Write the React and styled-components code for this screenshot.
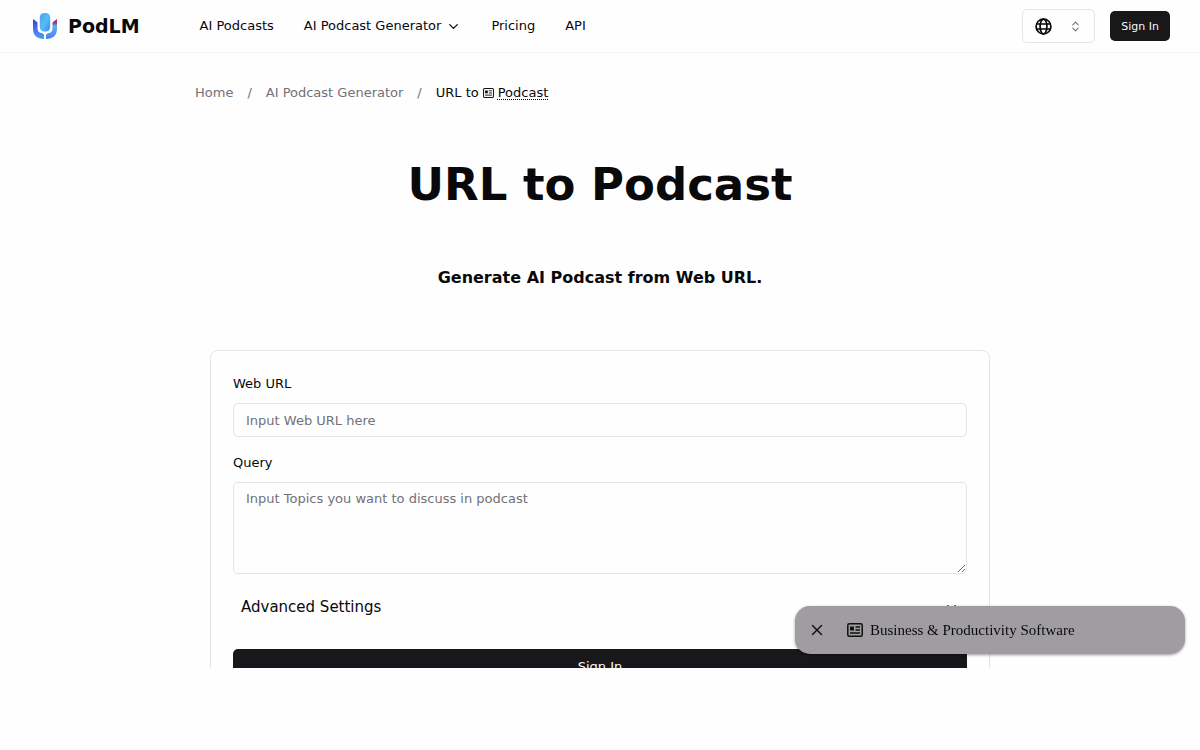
import styled, { createGlobalStyle } from 'styled-components';
import { ChevronDown, ChevronsUpDown, X } from 'lucide-react';

const GlobalStyle = createGlobalStyle`
  * {
    box-sizing: border-box;
  }
  body {
    margin: 0;
    background: #fefefe;
    color: #09090b;
    font-family: 'DejaVu Sans', sans-serif;
    font-size: 13px;
    line-height: 20px;
  }
  a {
    color: inherit;
    text-decoration: none;
  }
  button, input, textarea {
    font-family: inherit;
  }
`;

const Page = styled.div`
  height: calc(100vh - 82px);
  overflow: hidden;
`;

const Header = styled.header`
  display: flex;
  align-items: center;
  height: 53px;
  padding: 0 30px 0 32px;
  border-bottom: 1px solid #f4f4f5;
`;

const Brand = styled.a`
  display: flex;
  align-items: center;
  gap: 10px;
  margin-right: 60px;
  font-size: 19px;
  font-weight: 700;
`;

const Menu = styled.nav`
  display: flex;
  align-items: center;
  gap: 30px;
  flex: 1;
`;

const MenuButton = styled.button`
  display: flex;
  align-items: center;
  gap: 5px;
  padding: 0;
  border: none;
  background: none;
  color: inherit;
  font-size: 13px;
  line-height: 20px;
  cursor: pointer;
`;

const LanguagePicker = styled.label`
  position: relative;
  display: flex;
  align-items: center;
  justify-content: space-between;
  width: 73px;
  height: 34px;
  margin-right: 15px;
  padding: 0 12px;
  border: 1px solid #e4e4e7;
  border-radius: 5px;
`;

const LanguageSelect = styled.select`
  position: absolute;
  inset: 0;
  width: 100%;
  opacity: 0;
  cursor: pointer;
`;

const SignInButton = styled.button`
  height: 30px;
  padding: 0 11px;
  border: none;
  border-radius: 5px;
  background: #18181b;
  color: #fafafa;
  font-size: 11px;
  cursor: pointer;
`;

const Breadcrumb = styled.nav`
  display: flex;
  gap: 14px;
  max-width: 810px;
  margin: 30px auto 0;
  color: #71717a;
`;

const Current = styled.span`
  display: flex;
  align-items: center;
  gap: 4px;
  color: #09090b;
`;

const Keyword = styled.a`
  text-decoration: underline dotted 1px;
  text-underline-offset: 2px;
`;

const Title = styled.h1`
  margin: 54px 0 0;
  font-size: 45px;
  line-height: 56px;
  text-align: center;
`;

const Subtitle = styled.h2`
  margin: 53px 0 60px;
  font-size: 16px;
  line-height: 24px;
  text-align: center;
`;

const Card = styled.form`
  display: flex;
  flex-direction: column;
  max-width: 780px;
  margin: 0 auto;
  padding: 23px 22px;
  border: 1px solid #e4e4e7;
  border-radius: 8px;
`;

const Field = styled.div`
  display: flex;
  flex-direction: column;
  gap: 9px;
  margin-bottom: 16px;
`;

const TextInput = styled.input`
  height: 34px;
  padding: 0 12px;
  border: 1px solid #e4e4e7;
  border-radius: 5px;
  background: transparent;
  font-size: 13px;
  &::placeholder {
    color: #71717a;
  }
`;

const TextArea = styled.textarea`
  height: 92px;
  padding: 6px 12px;
  border: 1px solid #e4e4e7;
  border-radius: 5px;
  background: transparent;
  font-size: 13px;
  line-height: 20px;
  resize: vertical;
  &::placeholder {
    color: #71717a;
  }
`;

const Advanced = styled.button`
  display: flex;
  align-items: center;
  justify-content: space-between;
  margin-bottom: 25px;
  padding: 5px 8px;
  border: none;
  background: none;
  color: inherit;
  font-size: 15px;
  line-height: 24px;
  cursor: pointer;
`;

const SubmitButton = styled.button`
  height: 34px;
  border: none;
  border-radius: 5px;
  background: #18181b;
  color: #fafafa;
  font-size: 13px;
  cursor: pointer;
`;

const Toast = styled.aside`
  position: fixed;
  right: 15px;
  bottom: 96px;
  display: flex;
  align-items: center;
  width: 390px;
  height: 48px;
  padding: 0 13px;
  border-radius: 15px;
  background: #9f9da0;
  box-shadow: 0 1px 3px rgba(0, 0, 0, 0.4);
  font-family: 'Liberation Serif', serif;
  font-size: 15px;
`;

const CloseButton = styled.button`
  display: flex;
  margin-right: 21px;
  padding: 0;
  border: none;
  background: none;
  color: #111;
  cursor: pointer;
`;

const ToastLink = styled.a`
  display: flex;
  align-items: center;
  gap: 7px;
`;

const Logo = () => (
  <svg width="26" height="28" viewBox="0 0 26 28" aria-hidden="true">
    <defs>
      <linearGradient id="mic" x1="0" y1="0" x2="1" y2="1">
        <stop offset="0" stopColor="#4a9ff0" />
        <stop offset="0.5" stopColor="#56bdf6" />
        <stop offset="1" stopColor="#4388f6" />
      </linearGradient>
      <linearGradient id="armLeft" x1="0" y1="0" x2="0" y2="1">
        <stop offset="0" stopColor="#3b2f98" />
        <stop offset="0.3" stopColor="#4a5cf0" />
        <stop offset="1" stopColor="#4a9df8" />
      </linearGradient>
      <linearGradient id="armRight" x1="0" y1="0" x2="0" y2="1">
        <stop offset="0" stopColor="#c01f3c" />
        <stop offset="0.2" stopColor="#a03a78" />
        <stop offset="0.35" stopColor="#5ab4f0" />
        <stop offset="1" stopColor="#4a7cf8" />
      </linearGradient>
    </defs>
    <rect x="7.800" y="1" width="10.400" height="18.500" rx="4.500" fill="url(#mic)" />
    <path d="M1 7l4.500 3.500V16q0 4.500 3.500 5q3 0.500 3 2.500V27Q1 26.500 1 16.500z" fill="url(#armLeft)" />
    <path d="M25 7l-4.500 3.500V16q0 4.500-3.500 5q-3 0.500-3 2.500V27Q25 26.500 25 16.500z" fill="url(#armRight)" />
  </svg>
);

const Globe = () => (
  <svg width="17" height="17" viewBox="0 0 17 17" fill="none" stroke="#09090b" strokeWidth="1.700" aria-hidden="true">
    <circle cx="8.500" cy="8.500" r="7.400" />
    <ellipse cx="8.500" cy="8.500" rx="3.400" ry="7.400" />
    <path d="M1.500 6h14M1.500 11h14" />
  </svg>
);

const NewsIcon = ({ width, height }) => (
  <svg
    width={width}
    height={height}
    viewBox="0 0 16 14"
    preserveAspectRatio="none"
    fill="none"
    stroke="#111"
    aria-hidden="true"
  >
    <rect x="0.800" y="0.800" width="14.400" height="12.400" rx="1.500" strokeWidth="1.500" />
    <rect x="3" y="3.500" width="4" height="4" fill="#111" stroke="none" />
    <path d="M8.500 4h4.500M8.500 7h4.500M3 10h10" strokeWidth="1.300" />
  </svg>
);

const App = () => {
  return (
    <>
      <GlobalStyle />
      <Page>
        <Header>
          <Brand href="#">
            <Logo />
            PodLM
          </Brand>
          <Menu>
            <a href="#podcasts">AI Podcasts</a>
            <MenuButton type="button">
              AI Podcast Generator
              <ChevronDown size={15} />
            </MenuButton>
            <a href="#pricing">Pricing</a>
            <a href="#api">API</a>
          </Menu>
          <LanguagePicker>
            <Globe />
            <ChevronsUpDown size={13} color="#71717a" />
            <LanguageSelect aria-label="Language" />
          </LanguagePicker>
          <SignInButton type="button">Sign In</SignInButton>
        </Header>
        <main>
          <Breadcrumb>
            <a href="#home">Home</a>
            <span>/</span>
            <a href="#generator">AI Podcast Generator</a>
            <span>/</span>
            <Current>
              URL to
              <NewsIcon width={11} height={10} />
              <Keyword href="#podcast">Podcast</Keyword>
            </Current>
          </Breadcrumb>
          <Title>URL to Podcast</Title>
          <Subtitle>Generate AI Podcast from Web URL.</Subtitle>
          <Card>
            <Field>
              <label htmlFor="url">Web URL</label>
              <TextInput id="url" type="url" placeholder="Input Web URL here" />
            </Field>
            <Field>
              <label htmlFor="query">Query</label>
              <TextArea id="query" placeholder="Input Topics you want to discuss in podcast" />
            </Field>
            <Advanced type="button">
              Advanced Settings
              <ChevronDown size={15} />
            </Advanced>
            <SubmitButton type="submit">Sign In</SubmitButton>
          </Card>
        </main>
      </Page>
      <Toast>
        <CloseButton type="button" aria-label="Close">
          <X size={18} />
        </CloseButton>
        <ToastLink href="#software">
          <NewsIcon width={16} height={14} />
          Business &amp; Productivity Software
        </ToastLink>
      </Toast>
    </>
  );
};

export default App;
